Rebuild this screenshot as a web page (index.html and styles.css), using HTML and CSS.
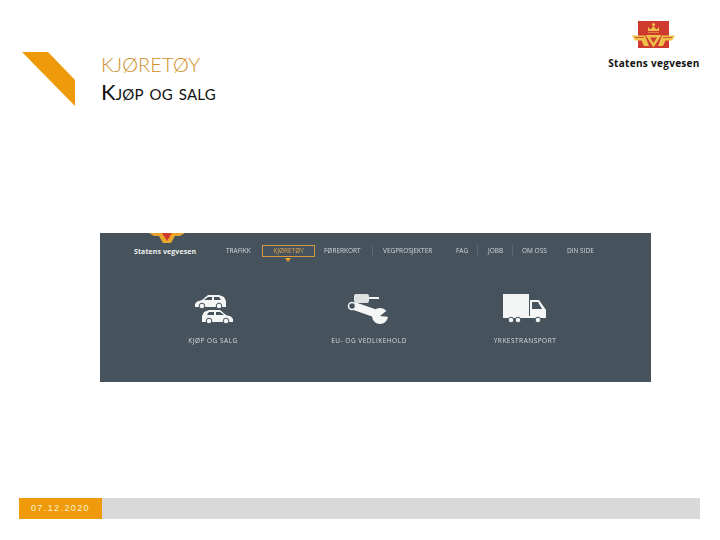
FILE: index.html
```html
<!DOCTYPE html>
<html lang="no">
<head>
<meta charset="utf-8">
<title>Kjøretøy</title>
<link rel="stylesheet" href="styles.css">
</head>
<body>
<div class="slide">
  <header class="top">
    <svg class="corner" width="53" height="54" viewBox="0 0 53 54"><path d="M0 0H26L53 28V54Z" fill="#ee9a0b"/></svg>
    <div class="titles">
      <h1 class="title-main">KJØRETØY</h1>
      <h2 class="title-sub">Kjøp og salg</h2>
    </div>
    <div class="brand">
      <svg class="logo" width="44" height="32" viewBox="0 0 44 32">
        <rect x="6" y="1" width="31" height="27" fill="#cf3a2e"/>
        <path d="M16 13V7L18.500 9.500L21.500 6L24.500 9.500L27 7V13Z" fill="#eec04a"/>
        <rect x="15.500" y="11" width="12" height="1.500" fill="#cf3a2e"/>
        <circle cx="21.500" cy="4.500" r="1.600" fill="#eec04a"/>
        <path d="M13.500 15H29.500L21.500 27.500Z" fill="#eec04a"/>
        <path d="M18 17.500H25L21.500 23Z" fill="#cf3a2e"/>
        <path d="M0 15.500H13L17 26H12L9.500 20.500H3Z M43 15.500H30L26 26H31L33.500 20.500H40Z" fill="#eec04a"/>
        <path d="M3 17.500H12M31 17.500H40" stroke="#cf3a2e" stroke-width="0.800"/>
      </svg>
      <div class="brand-name">Statens vegvesen</div>
    </div>
  </header>

  <main class="shot">
    <nav class="nav">
      <div class="nav-brand">
        <svg class="nav-wings" width="36" height="10" viewBox="0 0 36 10">
          <path d="M0 0H36L31 3H26L22 10H14L10 3H5Z" fill="#e9a52c"/>
          <path d="M13 0H23L18 8Z" fill="#cf3a2e"/>
        </svg>
        <div class="nav-logo-text">Statens vegvesen</div>
      </div>
      <div class="nav-links">
        <span class="nav-link link-a">TRAFIKK</span>
        <span class="nav-link nav-active">KJØRETØY</span>
        <span class="nav-link link-b">FØRERKORT</span>
        <span class="nav-sep sep-a"></span>
        <span class="nav-link link-c">VEGPROSJEKTER</span>
        <span class="nav-link link-d">FAG</span>
        <span class="nav-sep sep-b"></span>
        <span class="nav-link link-e">JOBB</span>
        <span class="nav-sep sep-c"></span>
        <span class="nav-link link-f">OM OSS</span>
        <span class="nav-link link-g">DIN SIDE</span>
      </div>
    </nav>
    <div class="cards">
      <div class="card">
        <svg class="icon" width="44" height="32" viewBox="0 0 44 32">
          <g transform="translate(36 1) scale(-1 1)">
            <path d="M1 13V7L3 3L8 1H19L25 6L30 7.500L32 10V13Z" fill="#f4f5f5"/>
            <path d="M8 3H13V6H6Z M15 3H19L23 6H15Z" fill="#46525c"/>
            <circle cx="8" cy="12" r="2.800" fill="#f4f5f5" stroke="#46525c"/>
            <circle cx="25" cy="12" r="2.800" fill="#f4f5f5" stroke="#46525c"/>
          </g>
          <g transform="translate(10 16)">
            <path d="M1 13V7L3 3L8 1H19L25 6L30 7.500L32 10V13Z" fill="#f4f5f5"/>
            <path d="M8 3H13V6H6Z M15 3H19L23 6H15Z" fill="#46525c"/>
            <circle cx="8" cy="12" r="2.800" fill="#f4f5f5" stroke="#46525c"/>
            <circle cx="25" cy="12" r="2.800" fill="#f4f5f5" stroke="#46525c"/>
          </g>
        </svg>
        <span class="card-label">KJØP OG SALG</span>
      </div>
      <div class="card">
        <svg class="icon" width="44" height="32" viewBox="0 0 44 32">
          <rect x="7" y="1" width="15" height="9" rx="2" fill="#dfe2e3"/>
          <rect x="22" y="4" width="10" height="2" fill="#f4f5f5"/>
          <path d="M7 13L30 21" stroke="#f4f5f5" stroke-width="8"/>
          <circle cx="33" cy="23" r="8" fill="#f4f5f5"/>
          <path d="M33 23L43 15V24Z" fill="#46525c"/>
          <circle cx="5" cy="13" r="3.500" fill="#46525c" stroke="#f4f5f5" stroke-width="1.500"/>
        </svg>
        <span class="card-label">EU- OG VEDLIKEHOLD</span>
      </div>
      <div class="card">
        <svg class="icon" width="44" height="32" viewBox="0 0 44 32">
          <rect x="0" y="1" width="26" height="22" fill="#f4f5f5"/>
          <path d="M27 7H36L43 17V25H27Z" fill="#f4f5f5"/>
          <path d="M29 9H35L39 16H29Z" fill="#46525c"/>
          <rect x="0" y="23" width="43" height="2" fill="#f4f5f5"/>
          <circle cx="8" cy="27" r="2.800" fill="#f4f5f5" stroke="#46525c"/>
          <circle cx="15" cy="27" r="2.800" fill="#f4f5f5" stroke="#46525c"/>
          <circle cx="35" cy="27" r="2.800" fill="#f4f5f5" stroke="#46525c"/>
        </svg>
        <span class="card-label">YRKESTRANSPORT</span>
      </div>
    </div>
  </main>

  <footer class="foot">
    <div class="date">07.12.2020</div>
    <div class="bar"></div>
  </footer>
</div>
</body>
</html>
```
FILE: styles.css
```css
html, body { margin: 0; padding: 0; background: #fff; }
.slide { width: 720px; height: 540px; display: flex; flex-direction: column; overflow: hidden; font-family: "Lato", "Liberation Sans", sans-serif; }

.top { display: flex; align-items: flex-start; height: 233px; padding-left: 22px; padding-right: 20px; box-sizing: border-box; }
.corner { margin-top: 52px; flex: none; }
.titles { margin-left: 26px; margin-top: 52px; flex: 1; }
.title-main { margin: 0; font-size: 20px; line-height: 24px; font-weight: 300; color: #cf8f28; letter-spacing: 0.1px; }
.title-sub { margin: 4px 0 0; font-size: 22px; line-height: 24px; font-weight: 400; color: #111; font-variant: small-caps; letter-spacing: 0.2px; }
.brand { display: flex; flex-direction: column; align-items: center; width: 92px; margin-top: 20px; }
.logo { display: block; }
.brand-name { margin-top: 5px; font: 700 10px/12px "Open Sans", sans-serif; letter-spacing: 0.3px; color: #111; white-space: nowrap; }

.shot { margin-left: 100px; width: 551px; height: 149px; background: #46525c; flex: none; overflow: hidden; }
.nav { display: flex; align-items: flex-start; height: 60px; padding-left: 34px; }
.nav-brand { width: 92px; flex: none; }
.nav-wings { display: block; margin-left: 15px; }
.nav-logo-text { margin-top: 4px; font: 700 7px/9px "Open Sans", sans-serif; letter-spacing: 0.1px; color: #eef0f0; white-space: nowrap; }
.nav-links { display: flex; align-items: center; height: 12px; margin-top: 12px; font: 400 6.500px/12px "Open Sans", sans-serif; color: #d3d7da; white-space: nowrap; filter: blur(0.4px); }
.nav-link { display: block; }
.nav-active { position: relative; box-sizing: border-box; width: 53px; height: 12px; margin-left: 8px; border: 1px solid #d69a3e; text-align: center; line-height: 10px; color: #e0a44a; }
.nav-active::after { content: ""; position: absolute; left: 22px; top: 12px; border: 3px solid transparent; border-top: 4px solid #e9a52c; }
.nav-sep { display: block; width: 1px; height: 12px; background: #5d6872; }
.link-a { width: 28px; }
.link-b { margin-left: 9px; width: 40px; }
.sep-a { margin-left: 8px; }
.link-c { margin-left: 10px; width: 54px; }
.link-d { margin-left: 19px; width: 12px; }
.sep-b { margin-left: 9px; }
.link-e { margin-left: 10px; width: 16px; }
.sep-c { margin-left: 8px; }
.link-f { margin-left: 9px; width: 27px; }
.link-g { margin-left: 18px; width: 28px; }

.cards { display: grid; grid-template-columns: repeat(3, 156px); padding-left: 35px; }
.card { display: flex; flex-direction: column; align-items: center; }
.icon { display: block; }
.card-label { margin-top: 11px; font: 400 6.500px/9px "Open Sans", sans-serif; letter-spacing: 0.5px; color: #d9dcdf; white-space: nowrap; filter: blur(0.4px); }

.foot { display: flex; margin-top: 116px; margin-left: 19px; height: 21px; width: 681px; flex: none; }
.date { width: 83px; flex: none; background: #ee9a0b; color: #fff3c9; font: 400 9px/21px "Liberation Sans", sans-serif; letter-spacing: 1.400px; text-align: center; }
.bar { flex: 1; background: #d9d9d9; }
```
